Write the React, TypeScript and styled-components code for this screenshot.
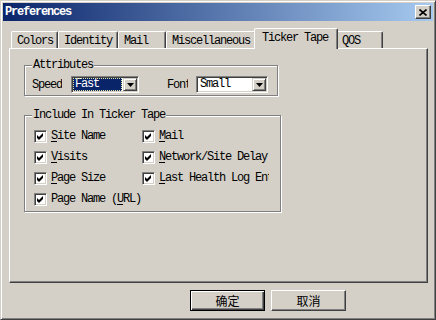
import React from 'react';
import styled, { createGlobalStyle, css } from 'styled-components';

const FONT = `"Liberation Mono", "DejaVu Sans Mono", monospace`;
const CJK = `"Noto Sans CJK SC", "Noto Sans", sans-serif`;

const Global = createGlobalStyle`
  html, body { margin: 0; padding: 0; background: #d4d0c8; }
  * { box-sizing: border-box; }
`;

const Window = styled.div`
  width: 436px;
  height: 320px;
  background: #d4d0c8;
  border: 1px solid;
  border-color: #d4d0c8 #404040 #404040 #d4d0c8;
  box-shadow: inset 1px 1px 0 #fff, inset -1px -1px 0 #808080;
  padding: 2px;
  display: flex;
  flex-direction: column;
  font-family: ${FONT};
  font-size: 12px;
  letter-spacing: -1.2px;
  color: #000;
  overflow: hidden;
`;

const TitleBar = styled.div`
  height: 18px;
  flex: none;
  background: linear-gradient(to right, #0a246a, #a6caf0);
  display: flex;
  align-items: center;
  justify-content: space-between;
  padding: 0 2px 0 2px;
`;

const Title = styled.span`
  color: #fff;
  font-weight: bold;
  line-height: 14px;
`;

const CloseButton = styled.div`
  width: 16px;
  height: 14px;
  background: #d4d0c8;
  border: 1px solid;
  border-color: #fff #404040 #404040 #fff;
  box-shadow: inset -1px -1px 0 #808080;
  display: flex;
  align-items: center;
  justify-content: center;
`;

const Body = styled.div`
  flex: 1;
  display: flex;
  flex-direction: column;
  padding: 7px 5px 0 6px;
`;

const TabStrip = styled.div`
  height: 20px;
  flex: none;
  display: flex;
  align-items: flex-end;
  padding-left: 2px;
  position: relative;
  z-index: 1;
`;

const Tab = styled.div<{ $active?: boolean; $w: number }>`
  width: ${(p) => p.$w}px;
  height: 17px;
  flex: none;
  background: #d4d0c8;
  border-top: 1px solid #fff;
  border-left: 1px solid #fff;
  border-right: 1px solid #404040;
  box-shadow: inset -1px 0 0 #808080;
  border-radius: 2px 2px 0 0;
  padding: 1px 0 0 5px;
  display: flex;
  align-items: center;
  white-space: nowrap;
  overflow: hidden;
  ${(p) =>
    p.$active &&
    css`
      width: ${p.$w + 4}px;
      height: 21px;
      margin: 0 -2px -1px -2px;
      padding: 0 0 3px 7px;
      position: relative;
      z-index: 2;
    `}
`;

const Panel = styled.div`
  height: 235px;
  flex: none;
  border: 1px solid;
  border-color: #fff #404040 #404040 #fff;
  box-shadow: inset -1px -1px 0 #808080;
  padding: 9px 0 0 14px;
  display: flex;
  flex-direction: column;
  gap: 12px;
`;

const Group = styled.fieldset<{ $w: number }>`
  width: ${(p) => p.$w}px;
  margin: 0;
  padding: 4px 7px 2px 7px;
  min-width: 0;
  border: 1px solid #808080;
  box-shadow: inset 1px 1px 0 #fff, 1px 1px 0 #fff;
`;

const Legend = styled.legend`
  padding: 0 1px 0 1px;
  line-height: 14px;
  background: #d4d0c8;
`;

const AttrRow = styled.div`
  display: flex;
  align-items: center;
  height: 17px;
`;

const FieldLabel = styled.span<{ $w: number; $gap: number; $ml?: number }>`
  width: ${(p) => p.$w}px;
  margin-left: ${(p) => p.$ml ?? 0}px;
  margin-right: ${(p) => p.$gap}px;
  overflow: hidden;
  white-space: nowrap;
  flex: none;
`;

const Combo = styled.div<{ $w: number }>`
  width: ${(p) => p.$w}px;
  height: 17px;
  flex: none;
  background: #fff;
  border: 1px solid;
  border-color: #808080 #fff #fff #808080;
  box-shadow: inset 1px 1px 0 #404040, inset -1px -1px 0 #d4d0c8;
  padding: 1px;
  display: flex;
`;

const ComboValue = styled.div<{ $selected?: boolean }>`
  flex: 1;
  height: 13px;
  line-height: 13px;
  padding-left: 2px;
  margin-right: 1px;
  white-space: nowrap;
  ${(p) =>
    p.$selected &&
    css`
      background: #0a246a;
      color: #fff;
      outline: 1px dotted #e8e4a0;
      outline-offset: -1px;
    `}
`;

const ArrowButton = styled.div`
  width: 14px;
  height: 13px;
  flex: none;
  background: #d4d0c8;
  border: 1px solid;
  border-color: #d4d0c8 #404040 #404040 #d4d0c8;
  box-shadow: inset 1px 1px 0 #fff, inset -1px -1px 0 #808080;
  display: flex;
  align-items: center;
  justify-content: center;
`;

const CheckGrid = styled.div`
  display: grid;
  grid-template-columns: 108px 1fr;
  grid-auto-rows: 13px;
  row-gap: 8px;
  padding: 4px 0 3px 2px;
`;

const CheckItem = styled.label`
  display: flex;
  align-items: center;
  gap: 4px;
  white-space: nowrap;
  min-width: 0;
`;

const CheckText = styled.span<{ $w?: number }>`
  line-height: 13px;
  ${(p) =>
    p.$w &&
    css`
      width: ${p.$w}px;
      overflow: hidden;
    `}
  u {
    text-decoration: underline;
    text-underline-offset: 2px;
  }
`;

const Box = styled.span`
  width: 13px;
  height: 13px;
  flex: none;
  background: #fff;
  border: 1px solid;
  border-color: #808080 #fff #fff #808080;
  box-shadow: inset 1px 1px 0 #404040, inset -1px -1px 0 #d4d0c8;
  position: relative;
  display: block;
`;

const CheckMark = styled.svg`
  position: absolute;
  left: 0;
  top: 0;
  margin: -1px;
`;

const ButtonRow = styled.div`
  display: flex;
  justify-content: flex-end;
  gap: 6px;
  padding-right: 82px;
  margin-top: 7px;
`;

const PushButton = styled.div<{ $default?: boolean }>`
  width: 75px;
  height: 21px;
  background: #d4d0c8;
  font-family: ${CJK};
  font-size: 12px;
  letter-spacing: 0;
  display: flex;
  align-items: center;
  justify-content: center;
  border: 1px solid;
  border-color: #fff #404040 #404040 #fff;
  box-shadow: inset -1px -1px 0 #808080;
  ${(p) =>
    p.$default &&
    css`
      border-color: #000;
      box-shadow: inset 1px 1px 0 #fff, inset -1px -1px 0 #404040, inset -2px -2px 0 #808080;
    `}
`;

const Check = ({ children, w }: { children: React.ReactNode; w?: number }) => (
  <CheckItem>
    <Box>
      <CheckMark width="13" height="13" viewBox="0 0 13 13">
        <path d="M3 5 L5 7 L9 3 L9 6 L5 10 L3 8 Z" fill="#000" />
      </CheckMark>
    </Box>
    <CheckText $w={w}>{children}</CheckText>
  </CheckItem>
);

const Arrow = () => (
  <svg width="7" height="4" viewBox="0 0 7 4">
    <path d="M0 0 H7 L3.5 4 Z" fill="#000" />
  </svg>
);

const tabs: { label: string; w: number; active?: boolean }[] = [
  { label: 'Colors', w: 47 },
  { label: 'Identity', w: 60 },
  { label: 'Mail', w: 48 },
  { label: 'Miscellaneous', w: 90 },
  { label: 'Ticker Tape', w: 80, active: true },
  { label: 'QOS', w: 47 },
];

export default function App() {
  return (
    <>
      <Global />
      <Window>
        <TitleBar>
          <Title>Preferences</Title>
          <CloseButton>
            <svg width="8" height="7" viewBox="0 0 8 7">
              <path d="M0.5 0.5 L7.5 6.5 M7.5 0.5 L0.5 6.5" stroke="#000" strokeWidth="1.6" />
            </svg>
          </CloseButton>
        </TitleBar>
        <Body>
          <TabStrip>
            {tabs.map((t) => (
              <Tab key={t.label} $w={t.w} $active={t.active}>
                {t.label}
              </Tab>
            ))}
          </TabStrip>
          <Panel>
            <Group $w={254}>
              <Legend>Attributes</Legend>
              <AttrRow>
                <FieldLabel $w={30} $gap={9}>Speed</FieldLabel>
                <Combo $w={68}>
                  <ComboValue $selected>Fast</ComboValue>
                  <ArrowButton>
                    <Arrow />
                  </ArrowButton>
                </Combo>
                <FieldLabel $w={21} $gap={8} $ml={28}>Font</FieldLabel>
                <Combo $w={72}>
                  <ComboValue>Small</ComboValue>
                  <ArrowButton>
                    <Arrow />
                  </ArrowButton>
                </Combo>
              </AttrRow>
            </Group>
            <Group $w={257}>
              <Legend>Include In Ticker Tape</Legend>
              <CheckGrid>
                <Check><u>S</u>ite Name</Check>
                <Check><u>M</u>ail</Check>
                <Check><u>V</u>isits</Check>
                <Check><u>N</u>etwork/Site Delay</Check>
                <Check><u>P</u>age Size</Check>
                <Check w={110}><u>L</u>ast Health Log Entry</Check>
                <Check>Page Name (<u>U</u>RL)</Check>
              </CheckGrid>
            </Group>
          </Panel>
          <ButtonRow>
            <PushButton $default>确定</PushButton>
            <PushButton>取消</PushButton>
          </ButtonRow>
        </Body>
      </Window>
    </>
  );
}
